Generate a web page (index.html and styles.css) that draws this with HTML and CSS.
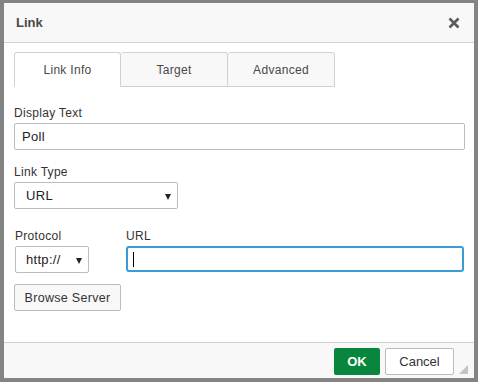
FILE: index.html
```html
<!DOCTYPE html>
<html lang="en">
<head>
    <meta charset="UTF-8">
    <meta name="viewport" content="width=device-width, initial-scale=1.0">
    <title>Link</title>
<link rel="stylesheet" href="styles.css">
</head>
<body>
    <div class="dialog">
        <div class="title">
            <div>Link</div>
            <a href="#" class="close">
                <svg width="12" height="12" viewBox="0 0 12 12">
                    <path d="M1.5 1.5L10.5 10.5M10.5 1.5L1.5 10.5" stroke="#5a5a5a" stroke-width="2.6"/>
                </svg>
            </a>
        </div>

        <div class="tabs">
            <div class="tab active">Link Info</div>
            <div class="tab">Target</div>
            <div class="tab">Advanced</div>
        </div>

        <div class="content">
            <div class="field first">
                <div class="label">Display Text</div>
                <div class="input wide">Poll</div>
            </div>

            <div class="field second">
                <div class="label">Link Type</div>
                <div class="select type">URL<span class="arrow"></span></div>
            </div>

            <div class="row">
                <div class="protocol">
                    <div class="label">Protocol</div>
                    <div class="select proto">http://<span class="arrow"></span></div>
                </div>
                <div class="url">
                    <div class="label">URL</div>
                    <div class="input focus"><span class="caret"></span></div>
                </div>
            </div>

            <a href="#" class="browse">Browse Server</a>
        </div>

        <div class="footer">
            <a href="#" class="btn ok">OK</a>
            <a href="#" class="btn cancel">Cancel</a>
            <span class="grip"></span>
        </div>
    </div>
</body>
</html>
```

FILE: styles.css
```css
body {
margin: 0;
background-color: #848484;
font-family: "Liberation Sans", Arial, sans-serif;
font-size: 12px;
letter-spacing: 0.3px;
color: #333;
}

.dialog {
margin: 3px 0 0 4px;
width: 470px;
height: 375px;
background-color: #fff;
display: flex;
flex-direction: column;
}

.title {
height: 39px;
border-bottom: solid 1px #d1d1d1;
background-color: #f8f8f8;
display: flex;
justify-content: space-between;
align-items: center;
padding: 0 14px 0 12px;
font-size: 13px;
font-weight: bold;
letter-spacing: 0;
color: #484848;
}

.close {
display: flex;
}

.tabs {
display: flex;
padding: 9px 0 0 10px;
}

.tab {
width: 105px;
height: 33px;
border: solid 1px #d1d1d1;
border-radius: 3px 3px 0 0;
background-color: #f8f8f8;
display: flex;
justify-content: center;
align-items: center;
color: #484848;
}

.tab + .tab {
border-left: none;
width: 106px;
}

.tab.active {
background-color: #fff;
border-bottom-color: #fff;
}

.content {
flex: 1;
padding: 18px 10px 0 10px;
}

.label {
line-height: 16px;
color: #333;
}

.field.first .label {
margin-bottom: 2px;
}

.field.second {
margin-top: 14px;
}

.field.second .label {
margin-bottom: 2px;
}

.input {
height: 25px;
border: solid 1px #bcbcbc;
border-radius: 2px;
display: flex;
align-items: center;
padding-left: 7px;
font-size: 13px;
color: #222;
}

.wide {
width: 442px;
}

.select {
position: relative;
height: 25px;
border: solid 1px #bcbcbc;
border-radius: 2px;
display: flex;
align-items: center;
padding-left: 11px;
font-size: 13px;
color: #222;
}

.type {
width: 151px;
}

.proto {
width: 62px;
margin-left: 1px;
padding-left: 10px;
}

.arrow {
position: absolute;
right: 6px;
top: 11px;
width: 0;
height: 0;
border-left: 3.5px solid transparent;
border-right: 3.5px solid transparent;
border-top: 6px solid #222;
}

.row {
display: flex;
margin-top: 19px;
}

.protocol {
width: 114px;
}

.protocol .label {
margin-left: 1px;
margin-bottom: 2px;
}

.url {
flex: 1;
}

.url .label {
margin-left: 1px;
margin-bottom: 2px;
}

.focus {
height: 22px;
border: solid 2px #3a9bd6;
border-radius: 3px;
padding-left: 5px;
width: 329px;
margin-left: 1px;
}

.caret {
width: 1px;
height: 15px;
background-color: #000;
}

.browse {
display: flex;
align-items: center;
justify-content: center;
margin-top: 11px;
width: 105px;
height: 25px;
border: solid 1px #bcbcbc;
border-radius: 2px;
background-color: #f8f8f8;
color: #333;
text-decoration: none;
font-size: 12.5px;
}

.footer {
position: relative;
height: 36px;
border-top: solid 1px #d1d1d1;
background-color: #f8f8f8;
display: flex;
justify-content: flex-end;
align-items: flex-start;
padding: 5px 20px 0 0;
box-sizing: border-box;
}

.btn {
height: 27px;
border-radius: 2px;
display: flex;
align-items: center;
justify-content: center;
text-decoration: none;
font-size: 13px;
letter-spacing: 0;
box-sizing: border-box;
}

.ok {
width: 46px;
background-color: #09863e;
color: #fff;
font-weight: bold;
margin-right: 5px;
}

.cancel {
width: 69px;
background-color: #fff;
border: solid 1px #bcbcbc;
color: #333;
}

.grip {
position: absolute;
right: 6px;
bottom: 4px;
width: 0;
height: 0;
border-left: 9px solid transparent;
border-bottom: 9px solid #c4c4c4;
}
```
